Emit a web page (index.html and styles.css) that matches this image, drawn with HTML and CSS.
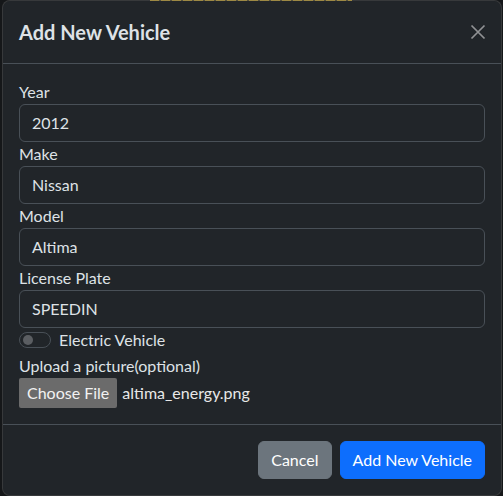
FILE: index.html
```html
<!DOCTYPE html>
<html lang="en">
<head>
<meta charset="utf-8">
<title>Add New Vehicle</title>
<link rel="stylesheet" href="styles.css">
</head>
<body>
<div class="page-behind"><div class="gold-strip"></div></div>
<div class="modal">
  <div class="modal-header">
    <h5 class="modal-title">Add New Vehicle</h5>
    <button class="btn-close" type="button" aria-label="Close">
      <svg width="16" height="16" viewBox="0 0 16 16"><path d="M1.5 1.5 L14.5 14.5 M14.5 1.5 L1.5 14.5" stroke="#909294" stroke-width="1.7" fill="none"/></svg>
    </button>
  </div>
  <div class="modal-body">
    <label class="form-label">Year</label>
    <div class="form-control">2012</div>
    <label class="form-label">Make</label>
    <div class="form-control">Nissan</div>
    <label class="form-label">Model</label>
    <div class="form-control">Altima</div>
    <label class="form-label">License Plate</label>
    <div class="form-control">SPEEDIN</div>
    <div class="form-check">
      <span class="switch"><span class="knob"></span></span>
      <span class="check-label">Electric Vehicle</span>
    </div>
    <label class="form-label">Upload a picture(optional)</label>
    <div class="file-input">
      <span class="file-btn">Choose File</span>
      <span class="file-name">altima_energy.png</span>
    </div>
  </div>
  <div class="modal-footer">
    <button class="btn btn-secondary" type="button">Cancel</button>
    <button class="btn btn-primary" type="button">Add New Vehicle</button>
  </div>
</div>
</body>
</html>
```
FILE: styles.css
```css
html, body {
  margin: 0;
  padding: 0;
}
body {
  background: #151719;
  font-family: "Segoe UI", Lato, "Liberation Sans", sans-serif;
  color: #dee2e6;
  font-size: 16px;
  line-height: 1.5;
  position: relative;
  height: 496px;
  overflow: hidden;
}
.page-behind {
  position: absolute;
  left: 0;
  top: 0;
  width: 503px;
  height: 2px;
}
.gold-strip {
  position: absolute;
  left: 150px;
  top: 0;
  width: 202px;
  height: 1px;
  background: repeating-linear-gradient(90deg, #8c7524 0 9px, #3a3522 9px 11px);
}
.modal {
  position: relative;
  z-index: 1;
  width: 500px;
  margin-left: 2px;
  box-sizing: border-box;
  background: #212529;
  background-clip: padding-box;
  border: 1px solid rgba(255, 255, 255, 0.15);
  border-radius: 8px;
}
.modal-header {
  display: flex;
  align-items: center;
  justify-content: space-between;
  padding: 16px;
  border-bottom: 1px solid #495057;
}
.modal-title {
  margin: 0;
  font-size: 20px;
  line-height: 30px;
  font-weight: 700;
  color: #dee2e6;
}
.btn-close {
  width: 16px;
  height: 16px;
  padding: 0;
  border: 0;
  background: transparent;
  display: flex;
  margin-right: -1px;
}
.modal-body {
  padding: 16px;
  display: flex;
  flex-direction: column;
}
.form-label {
  display: block;
  line-height: 24px;
}
.form-control {
  height: 38px;
  box-sizing: border-box;
  padding: 6px 12px;
  border: 1px solid #495057;
  border-radius: 6px;
  background: #212529;
  line-height: 24px;
  color: #dee2e6;
}
.form-check {
  display: flex;
  align-items: center;
  height: 24px;
  margin-bottom: 2px;
  gap: 8px;
}
.switch {
  width: 32px;
  height: 16px;
  box-sizing: border-box;
  border: 1px solid #495057;
  border-radius: 8px;
  background: #212529;
  display: flex;
  align-items: center;
  padding-left: 3px;
}
.knob {
  width: 10px;
  height: 10px;
  border-radius: 50%;
  background: #5b5e62;
}
.file-input {
  display: flex;
  align-items: center;
  height: 30px;
  gap: 5px;
}
.file-btn {
  background: #6b6b6b;
  color: #f2f2f2;
  height: 30px;
  line-height: 30px;
  padding: 0 8px;
  border-radius: 2px;
}
.file-name {
  color: #e8e8e8;
}
.modal-footer {
  display: flex;
  justify-content: flex-end;
  padding: 12px;
  border-top: 1px solid #495057;
}
.btn {
  margin: 4px;
  height: 38px;
  padding: 6px 12px;
  border-radius: 6px;
  border: 1px solid transparent;
  font-family: inherit;
  font-size: 16px;
  line-height: 24px;
  color: #ffffff;
}
.btn-secondary {
  background: #6c757d;
  border-color: #6c757d;
}
.btn-primary {
  background: #0d6efd;
  border-color: #0d6efd;
}
```
